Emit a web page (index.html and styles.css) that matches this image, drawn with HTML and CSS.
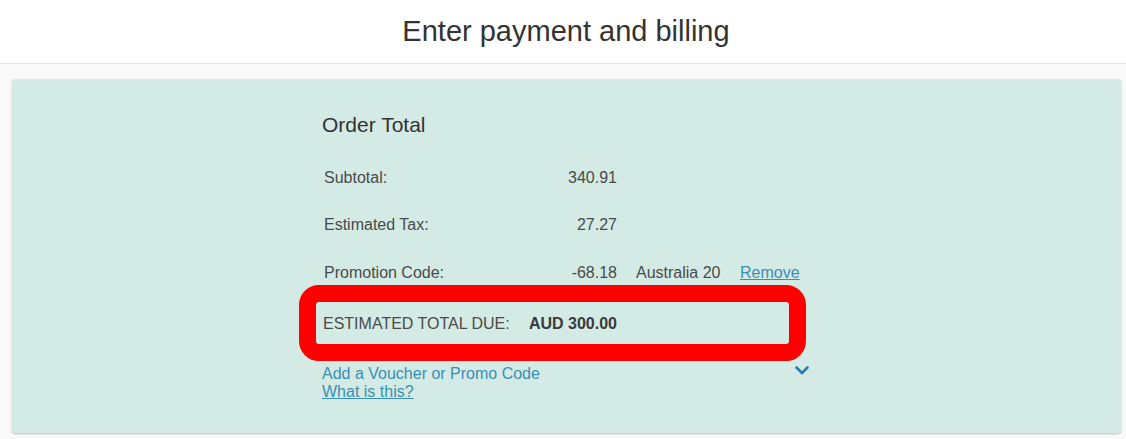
FILE: index.html
```html
<!DOCTYPE html>
<html>
<head>
<meta charset="utf-8">
<link rel="stylesheet" href="styles.css">
</head>
<body>
<header class="header">
  <h1 class="title">Enter payment and billing</h1>
</header>
<main class="page">
  <section class="card">
    <div class="summary">
      <h2 class="summary-title">Order Total</h2>
      <div class="rows">
        <div class="row">
          <span class="label">Subtotal:</span>
          <span class="value">340.91</span>
        </div>
        <div class="row">
          <span class="label">Estimated Tax:</span>
          <span class="value">27.27</span>
        </div>
        <div class="row">
          <span class="label">Promotion Code:</span>
          <span class="value">-68.18</span>
          <span class="promo">Australia 20</span>
          <a class="link remove" href="#">Remove</a>
        </div>
        <div class="row total">
          <span class="label">ESTIMATED TOTAL DUE:</span>
          <span class="value strong">AUD 300.00</span>
          <span class="highlight"></span>
        </div>
      </div>
      <div class="voucher">
        <div class="voucher-text">
          <span class="voucher-title">Add a Voucher or Promo Code</span>
          <a class="link" href="#">What is this?</a>
        </div>
        <svg class="chevron" width="14" height="9" viewBox="0 0 14 9"><path d="M1.5 1.5 L7 7 L12.5 1.5" fill="none" stroke="#2b7cab" stroke-width="2.6" stroke-linecap="round" stroke-linejoin="round"/></svg>
      </div>
    </div>
  </section>
</main>
</body>
</html>
```
FILE: styles.css
```css
* { box-sizing: border-box; }
html, body { margin: 0; padding: 0; }
body {
  font-family: "Liberation Sans", Arial, sans-serif;
  background: #f9f9f9;
  color: #444;
  height: 439px;
  overflow: hidden;
}
.header {
  background: #fff;
  height: 64px;
  border-bottom: 1px solid #e3e3e3;
  display: flex;
  justify-content: center;
  align-items: center;
  padding-left: 6px;
}
.title {
  margin: 0;
  font-weight: normal;
  font-size: 29px;
  color: #333;
  padding-bottom: 1px;
}
.page {
  padding: 15px 5px 0 12px;
}
.card {
  background: #d4eae4;
  height: 354px;
  border-radius: 3px;
  box-shadow: 0 1px 2px rgba(0,0,0,0.25);
  display: flex;
  justify-content: center;
  padding-top: 33px;
}
.summary {
  width: 489px;
}
.summary-title {
  margin: 0 0 17px 0;
  font-weight: normal;
  font-size: 21px;
  line-height: 25px;
  color: #333;
}
.rows {
  display: flex;
  flex-direction: column;
}
.row {
  display: grid;
  grid-template-columns: 192px 101px 123px auto;
  align-items: center;
  height: 47.5px;
  padding-left: 2px;
  font-size: 16px;
  color: #4a4a4a;
  position: relative;
}
.row .value { text-align: right; }
.row .promo { padding-left: 19px; }
.row.total {
  margin-top: 4px;
  padding-left: 1px;
  grid-template-columns: 193px 101px;
}
.strong { font-weight: bold; color: #3a3a3a; }
.link {
  color: #3a8fb5;
  text-decoration: underline;
  font-size: 16px;
}
.highlight {
  position: absolute;
  left: -23px;
  right: 5px;
  top: -16px;
  bottom: -13px;
  border: 17px solid #ff0000;
  border-radius: 20px;
  pointer-events: none;
}
.voucher {
  margin-top: 17px;
  display: flex;
  justify-content: space-between;
  align-items: flex-start;
}
.voucher-text {
  display: flex;
  flex-direction: column;
  align-items: flex-start;
  font-size: 16px;
  line-height: 18px;
}
.voucher-title { color: #3a8fb5; }
.chevron {
  margin-top: 1px;
  margin-right: 2px;
}
```
